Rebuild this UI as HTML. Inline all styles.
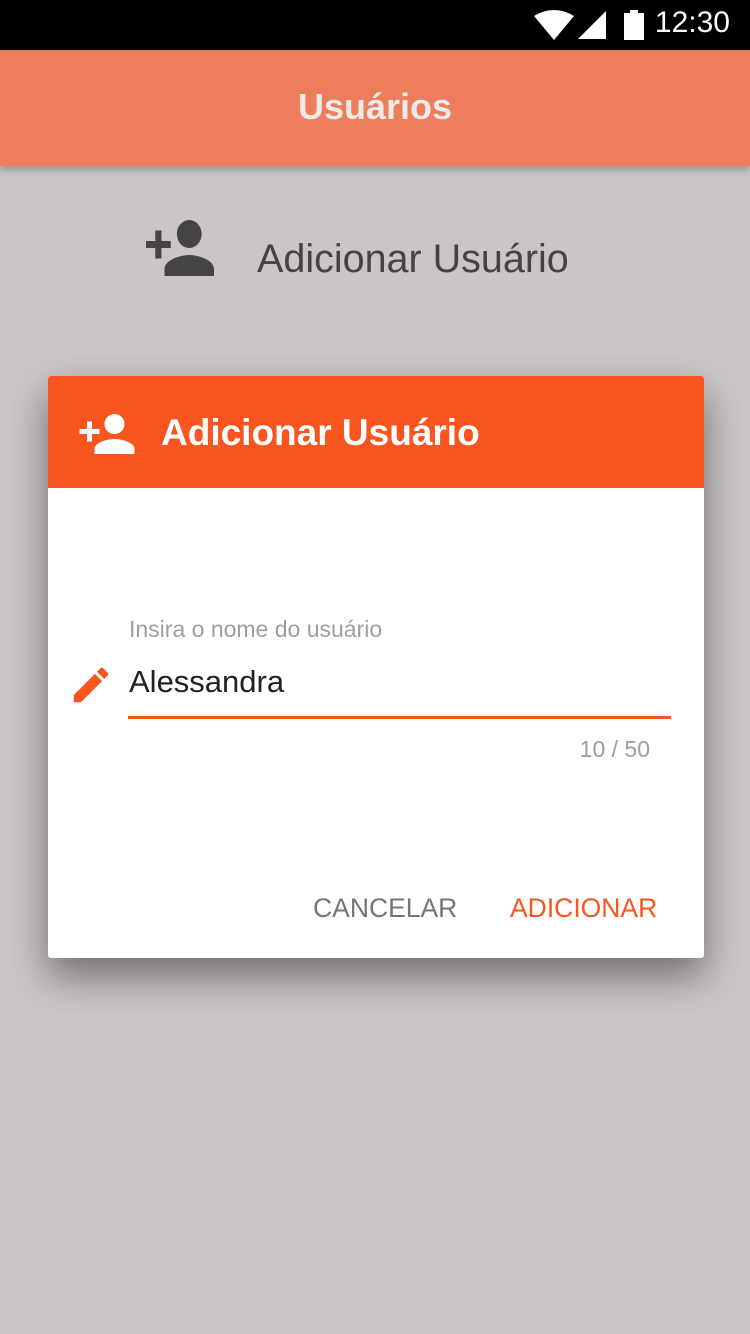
<!DOCTYPE html>
<html><head><meta charset="utf-8"><style>
*{margin:0;padding:0;box-sizing:border-box}
body{width:750px;height:1334px;background:#cbc6c6;font-family:"Liberation Sans",sans-serif;position:relative;overflow:hidden}
.sb{position:absolute;top:0;left:0;width:750px;height:50px;background:#000}
.time{position:absolute;right:20px;top:6px;color:#fff;font-size:30px}
.bar{position:absolute;top:50px;left:0;width:750px;height:116px;background:#ed7d5c;box-shadow:0 3px 8px rgba(0,0,0,.3)}
.bar div{text-align:center;color:#eeeae8;font-size:36px;font-weight:bold;line-height:114px}
.row{position:absolute;top:237px;left:257px;font-size:39.5px;color:#454343}
.dlg{position:absolute;left:48px;top:376px;width:656px;height:582px;background:#fff;border-radius:3px;box-shadow:0 18px 40px rgba(0,0,0,.45);overflow:hidden}
.hd{height:112px;background:#f8551f;position:relative}
.hd span{position:absolute;left:113px;top:36px;color:#fff;font-size:37px;font-weight:bold}
.lbl{position:absolute;left:81px;top:240px;font-size:23px;color:#9e9e9e}
.val{position:absolute;left:81px;top:288px;font-size:31px;color:#212121}
.ul{position:absolute;left:80px;top:340px;width:543px;height:3px;background:#f8551f}
.cnt{position:absolute;right:54px;top:360px;font-size:23px;color:#9e9e9e}
.b1{position:absolute;left:265px;top:517px;font-size:26.5px;color:#757575}
.b2{position:absolute;left:462px;top:517px;font-size:26.5px;color:#f8551f}
</style></head><body>
<div class="sb">
<svg style="position:absolute;left:534px;top:10px" width="40" height="30" viewBox="0 0 40 30"><path d="M0 6 Q20 -6 40 6 L20 30 Z" fill="#fff"/></svg>
<svg style="position:absolute;left:578px;top:11px" width="28" height="28"><path d="M0 28 L28 0 L28 28 Z" fill="#fff"/></svg>
<svg style="position:absolute;left:624px;top:10px" width="20" height="30"><rect x="0" y="3" width="20" height="27" fill="#fff"/><rect x="6" y="0" width="8" height="4" fill="#fff"/></svg>
<div class="time">12:30</div>
</div>
<div class="bar"><div>Usuários</div></div>
<svg style="position:absolute;left:146px;top:220px" width="68" height="56" viewBox="1 4 22 16" preserveAspectRatio="none"><path fill="#454343" d="M15 12c2.21 0 4-1.79 4-4s-1.79-4-4-4-4 1.79-4 4 1.79 4 4 4zm-9-2V7H4v3H1v2h3v3h2v-3h3v-2H6zm9 4c-2.67 0-8 1.34-8 4v2h16v-2c0-2.66-5.33-4-8-4z"/></svg>
<div class="row">Adicionar Usuário</div>
<div class="dlg">
<div class="hd">
<svg style="position:absolute;left:29px;top:28px" width="60" height="60" viewBox="0 0 24 24"><path fill="#fff" d="M15 12c2.21 0 4-1.790 4-4s-1.79-4-4-4-4 1.79-4 4 1.79 4 4 4zm-9-2V7H4v3H1v2h3v3h2v-3h3v-2H6zm9 4c-2.67 0-8 1.34-8 4v2h16v-2c0-2.66-5.33-4-8-4z"/></svg>
<span>Adicionar Usuário</span></div>
<div class="lbl">Insira o nome do usuário</div>
<svg style="position:absolute;left:20px;top:286px" width="46" height="46" viewBox="0 0 24 24"><path fill="#f8551f" d="M3 17.25V21h3.75L17.81 9.94l-3.75-3.75L3 17.25zM20.71 7.04a1 1 0 000-1.41l-2.34-2.34a1 1 0 00-1.41 0l-1.830 1.83 3.75 3.75 1.83-1.83z"/></svg>
<div class="val">Alessandra</div>
<div class="ul"></div>
<div class="cnt">10 / 50</div>
<div class="b1">CANCELAR</div>
<div class="b2">ADICIONAR</div>
</div>
</body></html>
